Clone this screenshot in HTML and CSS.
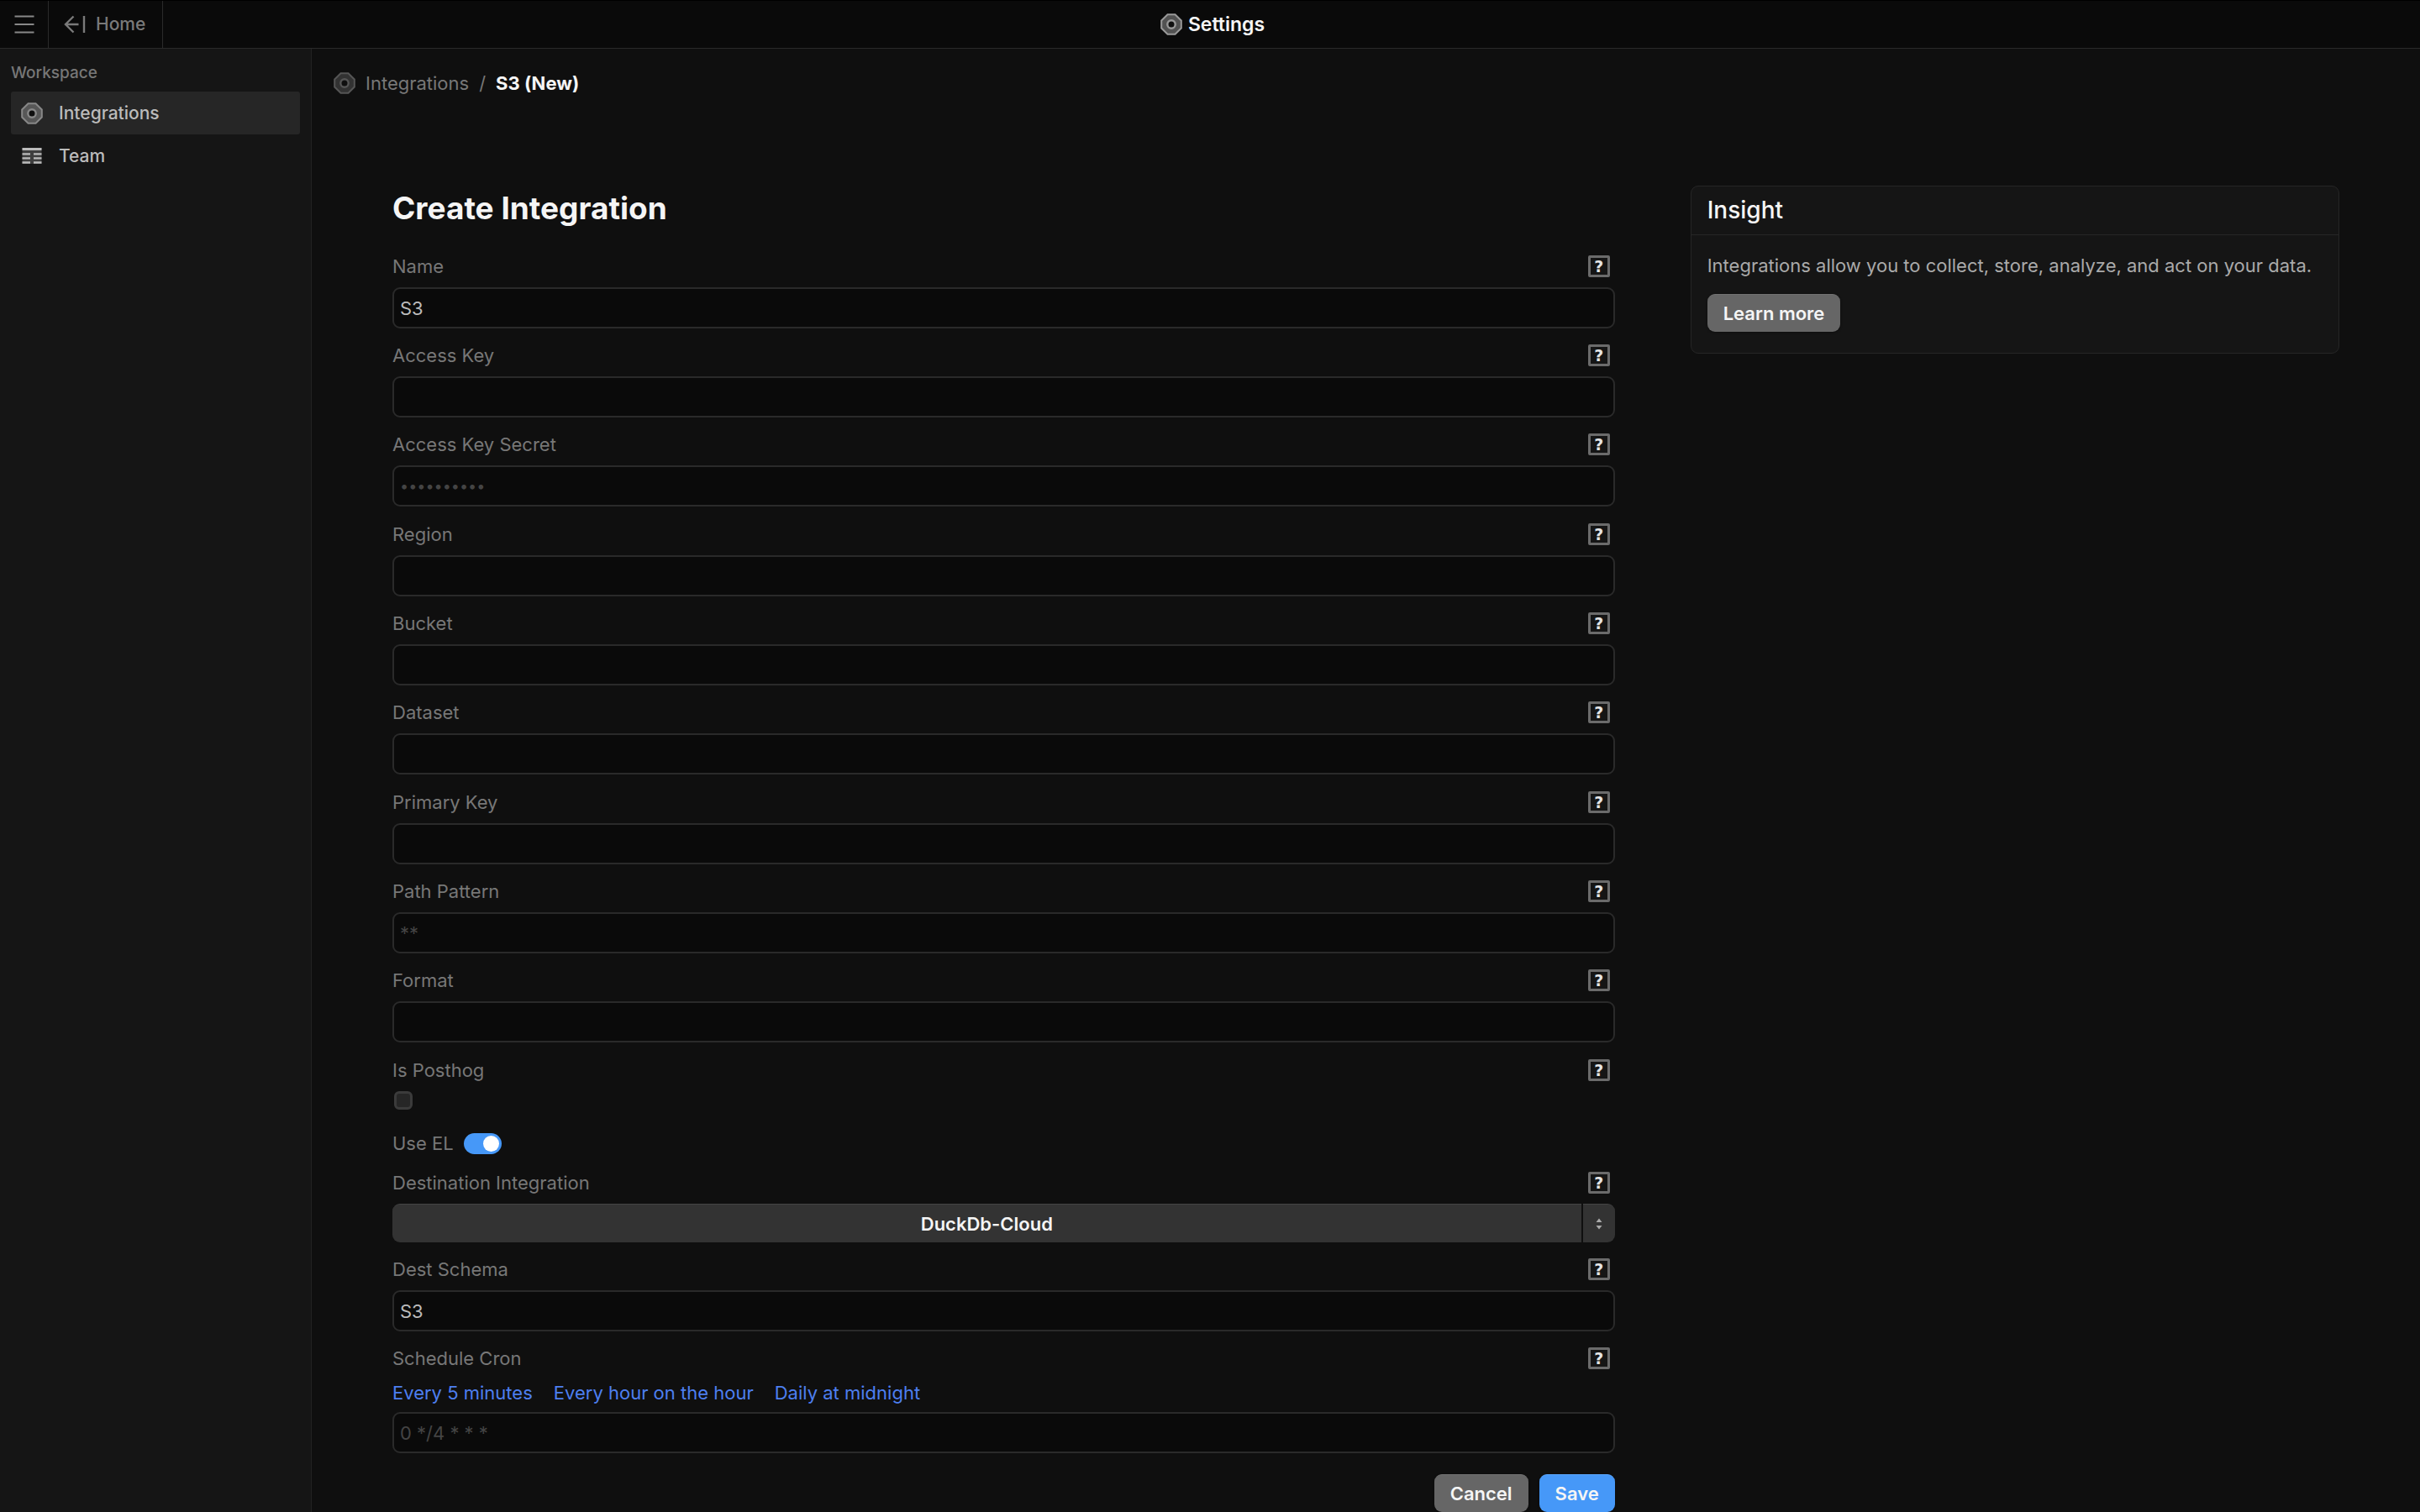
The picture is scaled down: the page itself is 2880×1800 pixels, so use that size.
FILE: index.html
```html
<!DOCTYPE html>
<html lang="en">

<head>
    <meta charset="UTF-8">
    <meta name="viewport" content="width=device-width, initial-scale=1.0">
    <title>Settings</title>
    <link rel="stylesheet" href="styles.css">
</head>

<body>
    <svg class="sprite" aria-hidden="true">
        <symbol id="icon-octagon" viewBox="0 0 26 26">
            <path d="M8.5 1.2h9l7.3 7.3v9l-7.3 7.3h-9l-7.3-7.3v-9z" fill="currentColor" fill-opacity="0.5" stroke="currentColor" stroke-width="2" />
            <circle class="octagon-hole" cx="13" cy="13" r="4.7" stroke="currentColor" stroke-width="2.4" />
        </symbol>
    </svg>

    <header class="topbar">
        <button class="menu-btn" aria-label="Menu">
            <svg width="24" height="24" viewBox="0 0 24 24" fill="none" stroke="currentColor" stroke-width="2.2">
                <path d="M0.5 2.5h23M0.5 12h23M0.5 21.5h23" />
            </svg>
        </button>
        <a class="home-link" href="#">
            <svg width="26" height="22" viewBox="0 0 26 22" fill="none" stroke="currentColor" stroke-width="2.4">
                <path d="M11.5 1.5L2 11l9.500 9.500M2 11h15.500M24 1v20" />
            </svg>
            Home
        </a>
        <div class="page-title">
            <svg class="icon" width="26" height="26"><use href="#icon-octagon" /></svg>
            Settings
        </div>
    </header>

    <div class="layout">
        <nav class="sidebar">
            <div class="sidebar-title">Workspace</div>
            <a class="sidebar-item active" href="#">
                <svg class="icon" width="26" height="26"><use href="#icon-octagon" /></svg>
                Integrations
            </a>
            <a class="sidebar-item" href="#">
                <svg class="icon-team" width="26" height="20" viewBox="0 0 26 20">
                    <path d="M1.500 0h23v19h-23z" fill="currentColor" fill-opacity="0.25" />
                    <path d="M1.500 0h23v3h-23zM1.500 6.200h9.500v2.300h-9.500zM15 6.200h9.500v2.300h-9.500zM1.500 11.200h9.500v2.300h-9.500zM15 11.200h9.500v2.300h-9.500zM1.500 16.200h9.500v2.600h-9.500zM15 16.200h9.500v2.600h-9.500z" fill="currentColor" />
                </svg>
                Team
            </a>
        </nav>

        <main class="main">
            <div class="breadcrumb">
                <svg class="icon" width="26" height="26"><use href="#icon-octagon" /></svg>
                <a href="#">Integrations</a>
                <span>/</span>
                <strong>S3 (New)</strong>
            </div>

            <div class="content">
                <form class="form">
                    <h1>Create Integration</h1>

                    <div class="group">
                        <div class="field">
                            <div class="field-head"><label for="name">Name</label><button type="button" class="help">?</button></div>
                            <input class="text-input" type="text" id="name" value="S3">
                        </div>
                        <div class="field">
                            <div class="field-head"><label for="access-key">Access Key</label><button type="button" class="help">?</button></div>
                            <input class="text-input" type="text" id="access-key">
                        </div>
                        <div class="field">
                            <div class="field-head"><label for="access-secret">Access Key Secret</label><button type="button" class="help">?</button></div>
                            <input class="text-input secret" type="password" id="access-secret" placeholder="••••••••••">
                        </div>
                    </div>

                    <div class="group">
                        <div class="field">
                            <div class="field-head"><label for="region">Region</label><button type="button" class="help">?</button></div>
                            <input class="text-input" type="text" id="region">
                        </div>
                        <div class="field">
                            <div class="field-head"><label for="bucket">Bucket</label><button type="button" class="help">?</button></div>
                            <input class="text-input" type="text" id="bucket">
                        </div>
                        <div class="field">
                            <div class="field-head"><label for="dataset">Dataset</label><button type="button" class="help">?</button></div>
                            <input class="text-input" type="text" id="dataset">
                        </div>
                    </div>

                    <div class="group">
                        <div class="field">
                            <div class="field-head"><label for="primary-key">Primary Key</label><button type="button" class="help">?</button></div>
                            <input class="text-input" type="text" id="primary-key">
                        </div>
                        <div class="field">
                            <div class="field-head"><label for="path-pattern">Path Pattern</label><button type="button" class="help">?</button></div>
                            <input class="text-input" type="text" id="path-pattern" placeholder="**">
                        </div>
                        <div class="field">
                            <div class="field-head"><label for="format">Format</label><button type="button" class="help">?</button></div>
                            <input class="text-input" type="text" id="format">
                        </div>
                    </div>

                    <div class="field">
                        <div class="field-head"><label for="is-posthog">Is Posthog</label><button type="button" class="help">?</button></div>
                        <input class="checkbox" type="checkbox" id="is-posthog">
                    </div>

                    <div class="toggle-row">
                        <label for="use-el">Use EL</label>
                        <input class="toggle" type="checkbox" role="switch" id="use-el" checked>
                    </div>

                    <div class="group">
                        <div class="field">
                            <div class="field-head"><label for="destination">Destination Integration</label><button type="button" class="help">?</button></div>
                            <div class="select-row">
                                <select class="select" id="destination">
                                    <option>DuckDb-Cloud</option>
                                </select>
                                <button type="button" class="select-arrows" aria-label="Choose destination">
                                    <svg width="8" height="14" viewBox="0 0 8 14" fill="currentColor">
                                        <path d="M4 0.500L7.500 5h-7zM4 13.500L7.500 9h-7z" />
                                    </svg>
                                </button>
                            </div>
                        </div>
                        <div class="field">
                            <div class="field-head"><label for="dest-schema">Dest Schema</label><button type="button" class="help">?</button></div>
                            <input class="text-input" type="text" id="dest-schema" value="S3">
                        </div>
                        <div class="field">
                            <div class="field-head"><label for="schedule">Schedule Cron</label><button type="button" class="help">?</button></div>
                            <div class="presets">
                                <a href="#">Every 5 minutes</a>
                                <a href="#">Every hour on the hour</a>
                                <a href="#">Daily at midnight</a>
                            </div>
                            <input class="text-input" type="text" id="schedule" placeholder="0 */4 * * *">
                        </div>
                    </div>

                    <div class="actions">
                        <button type="button" class="btn">Cancel</button>
                        <button type="submit" class="btn btn-primary">Save</button>
                    </div>
                </form>

                <aside class="insight">
                    <h2>Insight</h2>
                    <div class="insight-body">
                        <p>Integrations allow you to collect, store, analyze, and act on your data.</p>
                        <button class="btn">Learn more</button>
                    </div>
                </aside>
            </div>
        </main>
    </div>
</body>

</html>
```
FILE: styles.css
```css
* {
    box-sizing: border-box;
}

body {
    margin: 0;
    height: 100vh;
    display: flex;
    flex-direction: column;
    overflow: hidden;
    background-color: #0f0f0f;
    color: #777;
    font-family: Inter, sans-serif;
    font-size: 22px;
    line-height: 26px;
}

a {
    color: inherit;
    text-decoration: none;
}

button,
input,
select {
    font: inherit;
    margin: 0;
}

svg {
    display: block;
    flex: none;
}

.sprite {
    position: absolute;
    width: 0;
    height: 0;
}

.octagon-hole {
    fill: #0f0f0f;
}

/* top bar */
.topbar {
    display: grid;
    grid-template-columns: 58px 136px 1fr 188px;
    flex: none;
    height: 58px;
    background-color: #0a0a0a;
    border-top: 1px solid #000;
    border-bottom: 1px solid #2a2a2a;
    font-size: 21px;
}

.menu-btn {
    display: flex;
    align-items: center;
    justify-content: center;
    padding: 0;
    background: none;
    border: none;
    border-right: 1px solid #2a2a2a;
    color: #888;
    cursor: pointer;
}

.home-link {
    display: flex;
    align-items: center;
    gap: 12px;
    padding-left: 18px;
    border-right: 1px solid #2a2a2a;
    color: #7a7a7a;
    font-weight: 500;
}

.page-title {
    display: flex;
    align-items: center;
    justify-content: center;
    gap: 7px;
    color: #f5f5f5;
    font-size: 23px;
    font-weight: 600;
}

.page-title .icon {
    color: #999;
}

.layout {
    display: flex;
    flex: 1;
    min-height: 0;
}

/* sidebar */
.sidebar {
    flex: none;
    width: 371px;
    padding: 16px 13px;
    background-color: #151515;
    border-right: 1px solid #222;
}

.sidebar-title {
    margin-bottom: 9px;
    color: #777;
    font-size: 19px;
    font-weight: 500;
}

.sidebar-item {
    display: flex;
    align-items: center;
    gap: 19px;
    height: 51px;
    padding: 0 12px;
    border-radius: 3px;
    color: #bbb;
    font-size: 21px;
    font-weight: 500;
}

.sidebar-item.active {
    background-color: #262626;
}

.sidebar-item .icon {
    color: #888;
}

/* main */
.main {
    flex: 1;
    min-width: 0;
    padding: 28px 96px 0;
    overflow: auto;
    scrollbar-width: none;
}

.breadcrumb {
    display: flex;
    gap: 12px;
    margin: 0 0 109px -70px;
}

.breadcrumb .icon {
    color: #555;
}

.breadcrumb strong {
    color: #f5f5f5;
    font-weight: 700;
}

.content {
    display: flex;
    align-items: flex-start;
    gap: 90px;
}

.form {
    display: flex;
    flex-direction: column;
    flex: 1;
    gap: 20px;
}

h1 {
    margin: 0 0 9px;
    color: #f5f5f5;
    font-size: 37px;
    font-weight: 700;
    line-height: 54px;
}

.group {
    display: flex;
    flex-direction: column;
    gap: 19px;
}

.field {
    display: flex;
    flex-direction: column;
    gap: 12px;
}

.field-head {
    display: flex;
    align-items: center;
    justify-content: space-between;
    padding-right: 6px;
}

.help {
    display: flex;
    align-items: center;
    justify-content: center;
    width: 26px;
    height: 26px;
    padding: 0;
    background-color: #151515;
    border: 3px solid #6b6b6b;
    border-radius: 2px;
    color: #e5e5e5;
    font-family: "DejaVu Sans", sans-serif;
    font-size: 19px;
    font-weight: 700;
    line-height: 20px;
    cursor: pointer;
}

.text-input {
    width: 100%;
    height: 49px;
    padding: 0 7px;
    background-color: #0a0a0a;
    border: 2px solid #2a2a2a;
    border-radius: 9px;
    color: #bbb;
    outline: none;
}

.text-input::placeholder {
    color: #444;
    opacity: 1;
}

.text-input.secret {
    font-size: 18px;
}

.checkbox {
    appearance: none;
    width: 22px;
    height: 22px;
    margin: 0 2px 6px;
    background-color: #262626;
    border: 3px solid #3b3b3b;
    border-radius: 6px;
}

.toggle-row {
    display: flex;
    align-items: center;
    gap: 12px;
    height: 28px;
}

.toggle {
    appearance: none;
    display: flex;
    align-items: center;
    justify-content: flex-end;
    width: 45px;
    height: 25px;
    padding: 0 3px;
    background-color: #4698f8;
    border-radius: 13px;
}

.toggle::before {
    content: "";
    width: 19px;
    height: 19px;
    background-color: #fff;
    border-radius: 50%;
}

.select-row {
    display: flex;
    gap: 2px;
    height: 46px;
}

.select {
    appearance: none;
    flex: 1;
    padding: 0;
    background-color: #333;
    border: none;
    border-top: 1px solid #444;
    border-radius: 9px 0 0 9px;
    color: #f5f5f5;
    font-weight: 600;
    text-align-last: center;
}

.select-arrows {
    display: flex;
    align-items: center;
    justify-content: center;
    width: 38px;
    padding: 0;
    background-color: #333;
    border: none;
    border-top: 1px solid #444;
    border-radius: 0 9px 9px 0;
    color: #aaa;
}

.presets {
    display: flex;
    gap: 25px;
    padding-top: 5px;
    color: #4d7ff0;
    line-height: 22px;
}

.actions {
    display: flex;
    justify-content: flex-end;
    gap: 13px;
    padding-top: 5px;
}

.btn {
    height: 45px;
    padding: 0 19px;
    background-color: #666;
    border: none;
    border-top: 1px solid #727272;
    border-radius: 9px;
    box-shadow: 0 1px 3px rgba(0, 0, 0, 0.4);
    color: #f5f5f5;
    font-weight: 600;
    cursor: pointer;
}

.btn-primary {
    background-color: #4698f8;
    border-top-color: #5aa5fa;
}

/* insight card */
.insight {
    width: calc(100% / 3);
    background-color: #151515;
    border: 1px solid #262626;
    border-radius: 9px;
}

h2 {
    margin: 0;
    padding: 0 19px;
    border-bottom: 1px solid #262626;
    color: #f5f5f5;
    font-size: 28px;
    font-weight: 500;
    line-height: 57px;
}

.insight-body {
    padding: 23px 19px 25px;
    color: #aaa;
}

.insight-body p {
    margin: 0 0 21px;
}
```
